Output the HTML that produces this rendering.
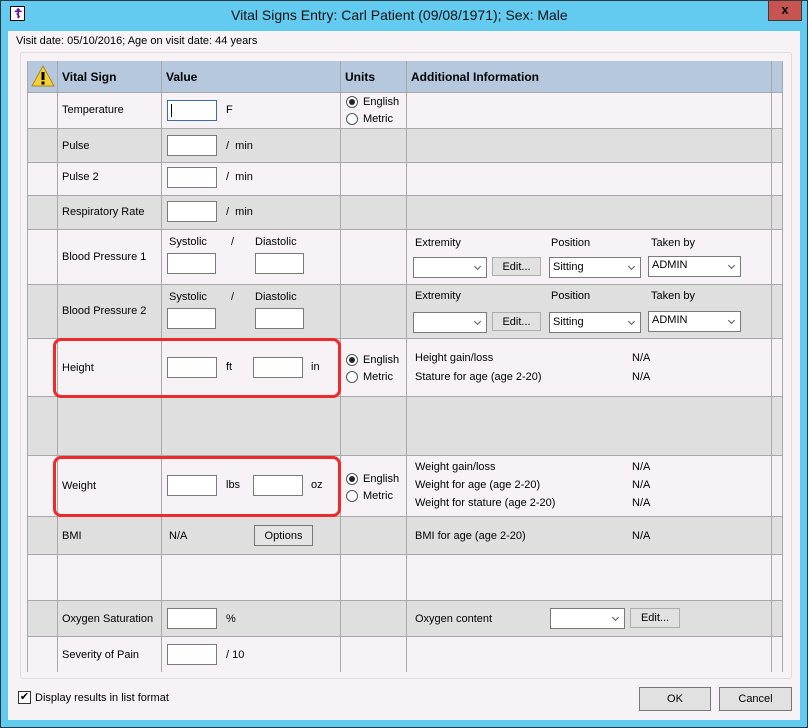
<!DOCTYPE html>
<html><head><style>
*{margin:0;padding:0;box-sizing:border-box}
body{width:808px;height:728px;background:#62cbef;font-family:"Liberation Sans",sans-serif;font-size:11px;color:#000;position:relative;overflow:hidden}
.a{position:absolute;white-space:nowrap}
.row{position:absolute;left:28px;width:754px;border-bottom:1px solid #a8a8a8}
.l{background:#f6f2f6}.g{background:#dfdfdf}
.v{position:absolute;top:61px;height:611px;width:1px;background:#a8a8a8}
.in{position:absolute;width:50px;height:21px;background:#fff;border:1px solid #7a7a7a}
.btn{position:absolute;background:#e1e1e1;border:1px solid #adadad;text-align:center}
.sel{position:absolute;height:21px;background:#fff;border:1px solid #7a7a7a;padding:3px 0 0 3px}
.sel:after{content:"";position:absolute;right:6px;top:6px;width:4px;height:4px;border-right:1px solid #555;border-bottom:1px solid #555;transform:rotate(45deg)}
.rad{position:absolute;width:12px;height:12px;border:1px solid #555;border-radius:50%;background:#fff}
.rad.on:after{content:"";position:absolute;left:2px;top:2px;width:6px;height:6px;border-radius:50%;background:#222}
.red{position:absolute;border:3px solid #ee2a2a;border-radius:8px}
</style></head><body>
<div class="a" style="left:0;top:0;width:808px;height:728px;border:1px solid #2a3a44"></div>
<div class="a" style="left:10px;top:6px;width:15px;height:15px;background:#fff;border:1px solid #000;"><span style="position:absolute;left:3px;top:-1px;color:#6a1a9a;font-size:13px;font-weight:bold">☦</span></div>
<div class="a" style="left:231px;top:7px;font-size:14px;color:#111">Vital Signs Entry: Carl Patient (09/08/1971); Sex: Male</div>
<div class="a" style="left:768px;top:0;width:34px;height:21px;background:#c75450;border:1px solid #3a3a3a;color:#000;font-weight:bold;font-size:13px;text-align:center;line-height:18px">x</div>
<div class="a" style="left:8px;top:31px;width:792px;height:689px;background:#f6f2f6"></div>
<div class="a" style="left:16px;top:35px;">Visit date: 05/10/2016; Age on visit date: 44 years</div>
<div class="a" style="left:20px;top:52px;width:772px;height:627px;border:1px solid #ddd;border-radius:3px;background:#f6f2f6"></div>
<div class="row" style="top:61px;height:32px;background:#b6c8de"></div>
<div class="row l" style="top:93px;height:36px"></div>
<div class="row g" style="top:129px;height:34px"></div>
<div class="row l" style="top:163px;height:33px"></div>
<div class="row g" style="top:196px;height:34px"></div>
<div class="row l" style="top:230px;height:55px"></div>
<div class="row g" style="top:285px;height:54px"></div>
<div class="row l" style="top:339px;height:58px"></div>
<div class="row g" style="top:397px;height:59px"></div>
<div class="row l" style="top:456px;height:61px"></div>
<div class="row g" style="top:517px;height:38px"></div>
<div class="row l" style="top:555px;height:46px"></div>
<div class="row g" style="top:601px;height:36px"></div>
<div class="row l" style="top:637px;height:35px;border:none"></div>
<div class="v" style="left:27px"></div><div class="v" style="left:57px"></div><div class="v" style="left:161px"></div><div class="v" style="left:340px"></div><div class="v" style="left:406px"></div><div class="v" style="left:771px"></div><div class="v" style="left:782px"></div>
<svg class="a" style="left:30px;top:64px" width="26" height="24"><polygon points="13,2 24,22 2,22" fill="#f4cf3a" stroke="#b08a10"/><rect x="11.5" y="8" width="3" height="8" fill="#000"/><rect x="11.5" y="17.5" width="3" height="3" fill="#000"/></svg>
<div class="a" style="left:62px;top:70px;font-weight:bold;font-size:12px">Vital Sign</div>
<div class="a" style="left:166px;top:70px;font-weight:bold;font-size:12px">Value</div>
<div class="a" style="left:345px;top:70px;font-weight:bold;font-size:12px">Units</div>
<div class="a" style="left:411px;top:70px;font-weight:bold;font-size:12px">Additional Information</div>
<div class="a" style="left:62px;top:104px">Temperature</div>
<div class="in" style="left:167px;top:100px;border-color:#3c6ea8"><span style="position:absolute;left:3px;top:3px;width:1px;height:13px;background:#000"></span></div>
<div class="a" style="left:226px;top:104px">F</div>
<div class="rad on" style="left:346px;top:96px"></div><div class="a" style="left:363px;top:96px">English</div>
<div class="rad" style="left:346px;top:113px"></div><div class="a" style="left:363px;top:113px">Metric</div>
<div class="a" style="left:62px;top:140px">Pulse</div><div class="in" style="left:167px;top:135px"></div><div class="a" style="left:226px;top:140px">/ &nbsp;min</div>
<div class="a" style="left:62px;top:171px">Pulse 2</div><div class="in" style="left:167px;top:167px"></div><div class="a" style="left:226px;top:171px">/ &nbsp;min</div>
<div class="a" style="left:62px;top:206px">Respiratory Rate</div><div class="in" style="left:167px;top:201px"></div><div class="a" style="left:226px;top:206px">/ &nbsp;min</div>
<div class="a" style="left:62px;top:251px">Blood Pressure 1</div>
<div class="a" style="left:169px;top:236px">Systolic</div><div class="a" style="left:231px;top:236px">/</div><div class="a" style="left:255px;top:236px">Diastolic</div>
<div class="in" style="left:167px;top:253px;width:49px"></div><div class="in" style="left:255px;top:253px;width:49px"></div>
<div class="a" style="left:415px;top:237px">Extremity</div><div class="a" style="left:551px;top:237px">Position</div><div class="a" style="left:651px;top:237px">Taken by</div>
<div class="sel" style="left:413px;top:257px;width:74px"></div><div class="btn" style="left:492px;top:257px;width:49px;height:19px;padding-top:3px">Edit...</div>
<div class="sel" style="left:549px;top:257px;width:92px">Sitting</div><div class="sel" style="left:648px;top:256px;width:93px;padding-top:2px">ADMIN</div>
<div class="a" style="left:62px;top:305px">Blood Pressure 2</div>
<div class="a" style="left:169px;top:291px">Systolic</div><div class="a" style="left:231px;top:291px">/</div><div class="a" style="left:255px;top:291px">Diastolic</div>
<div class="in" style="left:167px;top:308px;width:49px"></div><div class="in" style="left:255px;top:308px;width:49px"></div>
<div class="a" style="left:415px;top:290px">Extremity</div><div class="a" style="left:551px;top:290px">Position</div><div class="a" style="left:651px;top:290px">Taken by</div>
<div class="sel" style="left:413px;top:312px;width:74px"></div><div class="btn" style="left:492px;top:312px;width:49px;height:19px;padding-top:3px">Edit...</div>
<div class="sel" style="left:549px;top:312px;width:92px">Sitting</div><div class="sel" style="left:648px;top:311px;width:93px;padding-top:2px">ADMIN</div>
<div class="a" style="left:62px;top:362px">Height</div>
<div class="in" style="left:167px;top:357px"></div><div class="a" style="left:226px;top:361px">ft</div>
<div class="in" style="left:253px;top:357px"></div><div class="a" style="left:311px;top:361px">in</div>
<div class="rad on" style="left:346px;top:354px"></div><div class="a" style="left:363px;top:354px">English</div>
<div class="rad" style="left:346px;top:371px"></div><div class="a" style="left:363px;top:371px">Metric</div>
<div class="a" style="left:415px;top:352px">Height gain/loss</div><div class="a" style="left:632px;top:352px">N/A</div>
<div class="a" style="left:415px;top:371px">Stature for age (age 2-20)</div><div class="a" style="left:632px;top:371px">N/A</div>
<div class="red" style="left:53px;top:338px;width:288px;height:60px"></div>
<div class="a" style="left:62px;top:480px">Weight</div>
<div class="in" style="left:167px;top:475px"></div><div class="a" style="left:226px;top:479px">lbs</div>
<div class="in" style="left:253px;top:475px"></div><div class="a" style="left:311px;top:479px">oz</div>
<div class="rad on" style="left:346px;top:473px"></div><div class="a" style="left:363px;top:473px">English</div>
<div class="rad" style="left:346px;top:490px"></div><div class="a" style="left:363px;top:490px">Metric</div>
<div class="a" style="left:415px;top:461px">Weight gain/loss</div><div class="a" style="left:632px;top:461px">N/A</div>
<div class="a" style="left:415px;top:479px">Weight for age (age 2-20)</div><div class="a" style="left:632px;top:479px">N/A</div>
<div class="a" style="left:415px;top:497px">Weight for stature (age 2-20)</div><div class="a" style="left:632px;top:497px">N/A</div>
<div class="red" style="left:53px;top:456px;width:288px;height:61px"></div>
<div class="a" style="left:62px;top:530px">BMI</div><div class="a" style="left:169px;top:530px">N/A</div>
<div class="btn" style="left:254px;top:525px;width:59px;height:21px;padding-top:4px;background:#e4e4e4;border-color:#777">Options</div>
<div class="a" style="left:415px;top:530px">BMI for age (age 2-20)</div><div class="a" style="left:632px;top:530px">N/A</div>
<div class="a" style="left:62px;top:613px">Oxygen Saturation</div><div class="in" style="left:167px;top:608px"></div><div class="a" style="left:226px;top:613px">%</div>
<div class="a" style="left:415px;top:613px">Oxygen content</div>
<div class="sel" style="left:550px;top:608px;width:75px"></div><div class="btn" style="left:630px;top:608px;width:50px;height:20px;padding-top:3px">Edit...</div>
<div class="a" style="left:62px;top:649px">Severity of Pain</div><div class="in" style="left:167px;top:644px"></div><div class="a" style="left:226px;top:649px">/ 10</div>
<div class="a" style="left:18px;top:691px;width:13px;height:13px;border:1px solid #333;background:#fff;font-size:11px;line-height:11px;text-align:center">✔</div>
<div class="a" style="left:35px;top:692px">Display results in list format</div>
<div class="btn" style="left:639px;top:687px;width:72px;height:24px;padding-top:5px;border-color:#777">OK</div>
<div class="btn" style="left:719px;top:687px;width:73px;height:24px;padding-top:5px;border-color:#777">Cancel</div>
</body></html>
